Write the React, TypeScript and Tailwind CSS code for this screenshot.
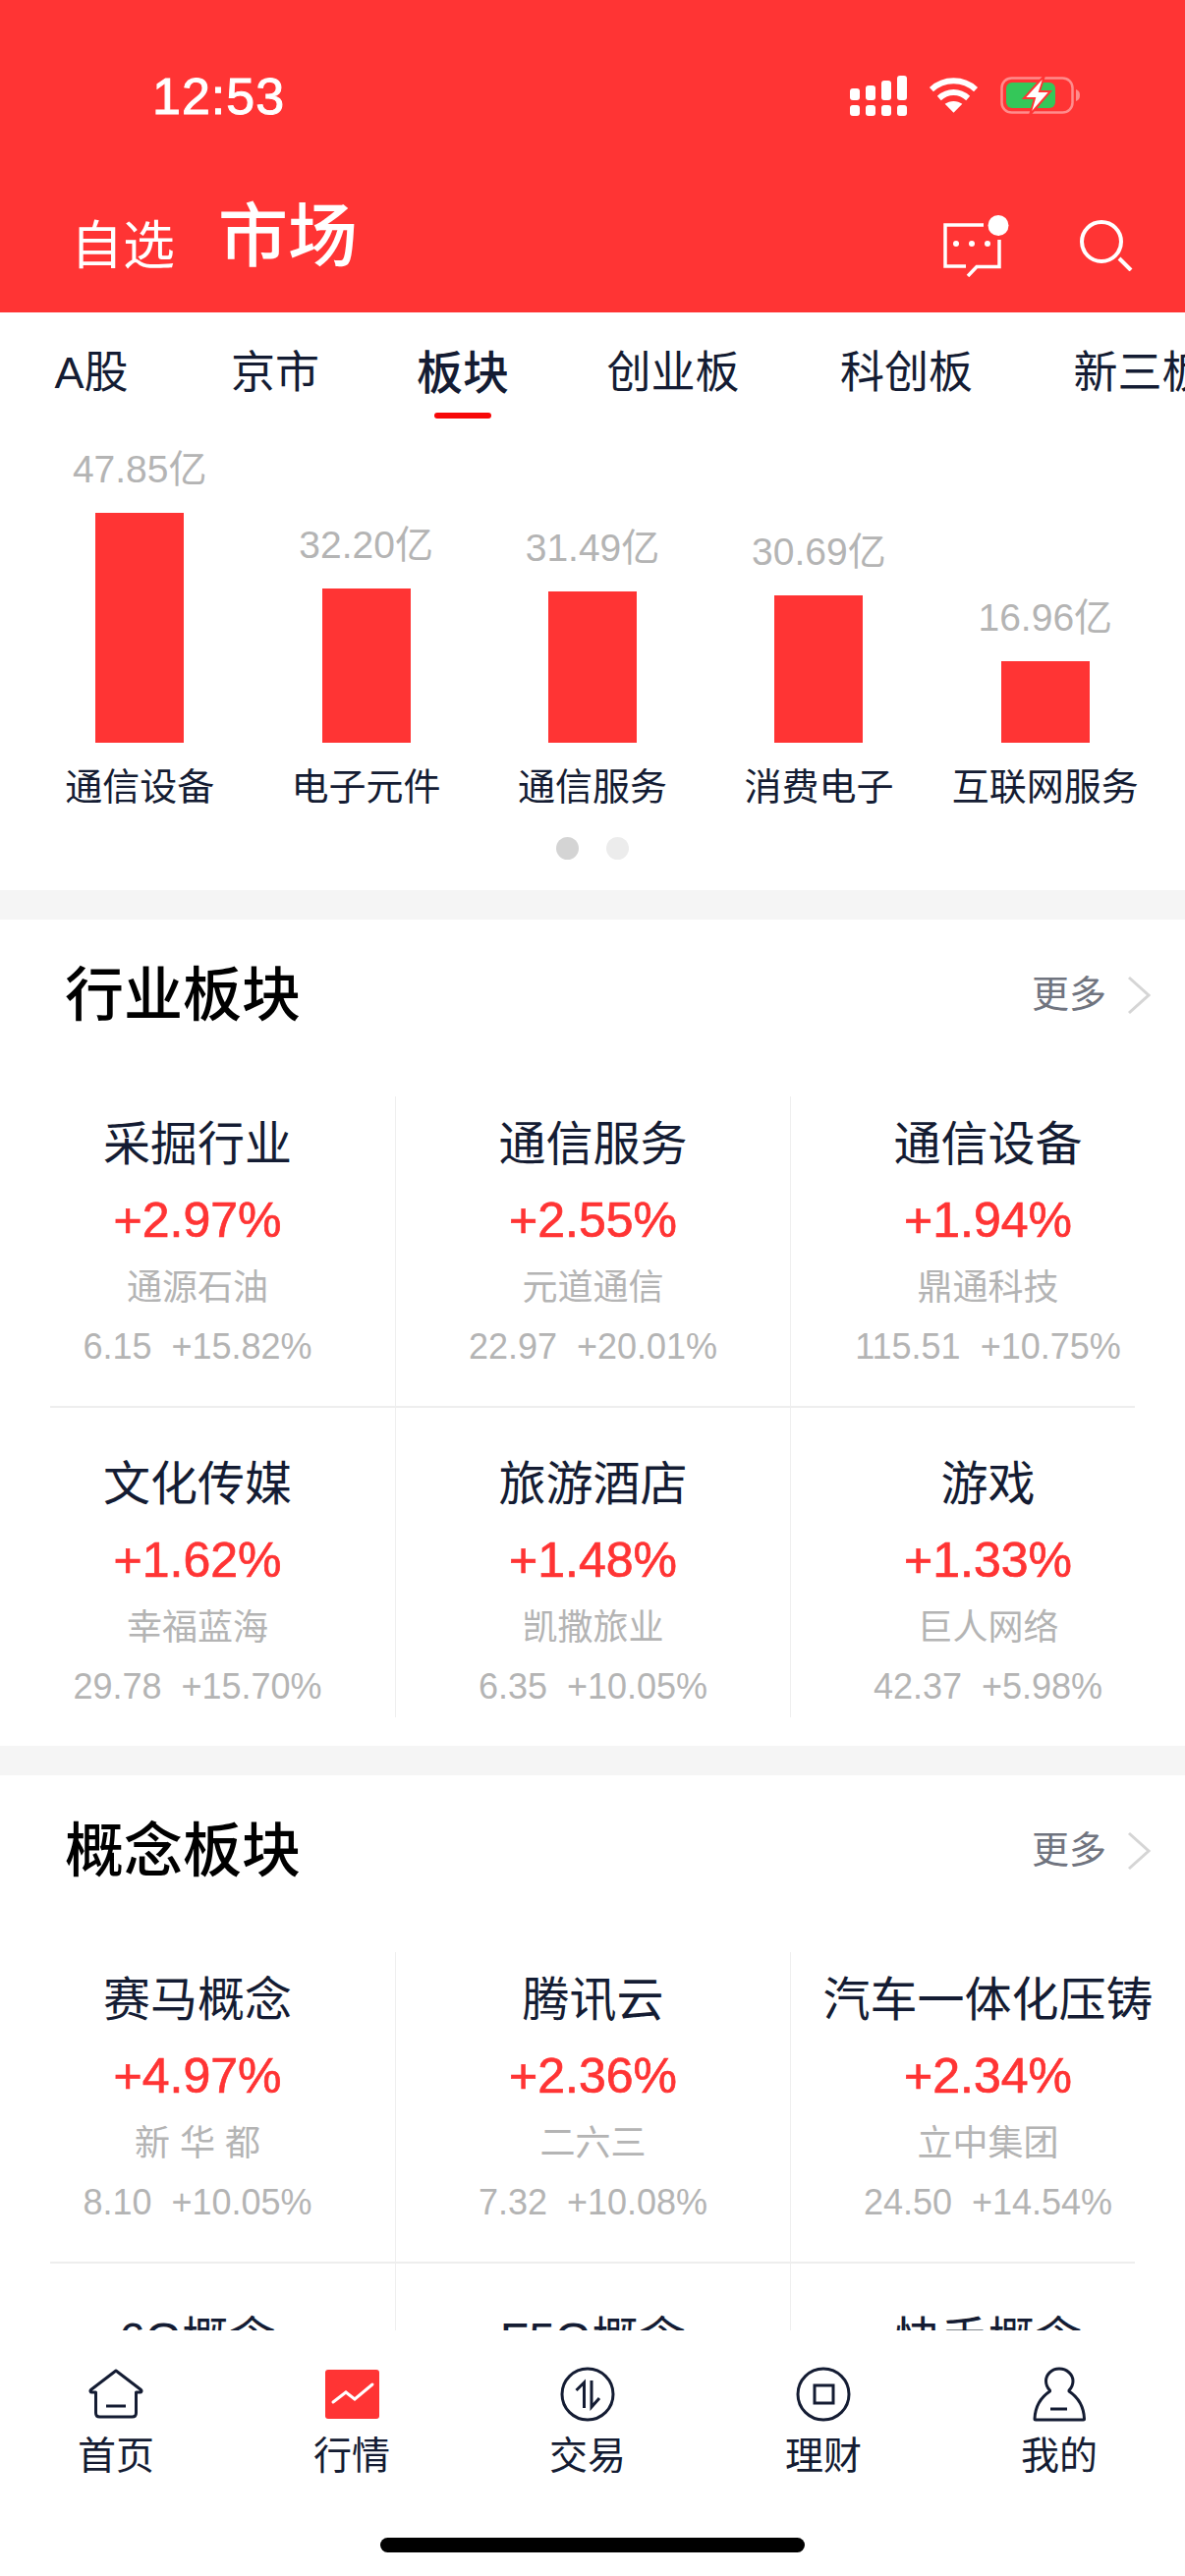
import React from 'react';

const bars = [
  { value: '47.85亿', name: '通信设备', height: 234 },
  { value: '32.20亿', name: '电子元件', height: 157 },
  { value: '31.49亿', name: '通信服务', height: 154 },
  { value: '30.69亿', name: '消费电子', height: 150 },
  { value: '16.96亿', name: '互联网服务', height: 83 },
];

const tabs = [
  { label: 'A股', cls: 'w-[186px]' },
  { label: '京市', cls: 'w-[188px]' },
  { label: '板块', cls: 'w-[194px]', active: true },
  { label: '创业板', cls: 'w-[234px]' },
  { label: '科创板', cls: 'w-[241px]' },
  { label: '新三板', cls: 'w-[234px]' },
];

const industry = [
  [
    { name: '采掘行业', pct: '+2.97%', stock: '通源石油', price: '6.15', chg: '+15.82%' },
    { name: '通信服务', pct: '+2.55%', stock: '元道通信', price: '22.97', chg: '+20.01%' },
    { name: '通信设备', pct: '+1.94%', stock: '鼎通科技', price: '115.51', chg: '+10.75%' },
  ],
  [
    { name: '文化传媒', pct: '+1.62%', stock: '幸福蓝海', price: '29.78', chg: '+15.70%' },
    { name: '旅游酒店', pct: '+1.48%', stock: '凯撒旅业', price: '6.35', chg: '+10.05%' },
    { name: '游戏', pct: '+1.33%', stock: '巨人网络', price: '42.37', chg: '+5.98%' },
  ],
];

const concept = [
  [
    { name: '赛马概念', pct: '+4.97%', stock: '新 华 都', price: '8.10', chg: '+10.05%' },
    { name: '腾讯云', pct: '+2.36%', stock: '二六三', price: '7.32', chg: '+10.08%' },
    { name: '汽车一体化压铸', pct: '+2.34%', stock: '立中集团', price: '24.50', chg: '+14.54%' },
  ],
  // this row is cut by the tab bar, only the tops of the names show
  [
    { name: '6G概念', pct: '', stock: '', price: '', chg: '' },
    { name: 'F5G概念', pct: '', stock: '', price: '', chg: '' },
    { name: '快手概念', pct: '', stock: '', price: '', chg: '' },
  ],
];

type Item = { name: string; pct: string; stock: string; price: string; chg: string };

const Cell = ({ item, col, row }: { item: Item; col: number; row: number }) => (
  <div
    className={`flex flex-col items-center ${row === 0 ? 'h-[315px] pt-[20px]' : 'h-[315px] pt-[49px]'} ${
      col > 0 ? 'border-l border-[#efefef]' : ''
    }`}
  >
    <div className="h-[58px] leading-[58px] text-[48px] text-[#141c33] whitespace-nowrap">{item.name}</div>
    <div className="h-[64px] mt-[16px] leading-[64px] text-[50px] text-[#ff3434] [-webkit-text-stroke:0.7px_#ff3434]">
      {item.pct}
    </div>
    <div className="h-[44px] mt-[15px] leading-[44px] text-[36px] text-[#b4b4b4]">{item.stock}</div>
    <div className="h-[44px] mt-[16px] leading-[44px] text-[36px] text-[#b4b4b4] whitespace-pre">
      {item.price}
      {'  '}
      {item.chg}
    </div>
  </div>
);

const Section = ({ title, rows }: { title: string; rows: Item[][] }) => (
  <section className="bg-white pb-[29px]">
    <div className="h-[180px] pb-[24px] flex items-center justify-between pl-[66px] pr-[34px]">
      <h2 className="text-[60px] font-medium text-black">{title}</h2>
      <div className="flex items-center gap-[20px] -mt-[2px]">
        <span className="text-[38px] leading-[50px] -mt-[2px] text-[#70747f]">更多</span>
        <svg width="26" height="42" viewBox="0 0 26 42" fill="none" stroke="#d5d5d5" strokeWidth="3">
          <path d="M3 3l20 18L3 39" />
        </svg>
      </div>
    </div>
    {rows.map((row, i) => (
      <div key={i}>
        {i > 0 && <div className="h-[2px] mx-[51px] bg-[#eeeeee]" />}
        <div className="grid grid-cols-3">
          {row.map((item, j) => (
            <Cell key={item.name} item={item} col={j} row={i} />
          ))}
        </div>
      </div>
    ))}
  </section>
);

const StatusIcons = () => (
  <div className="flex items-center gap-[22px]">
    <svg width="58" height="41" viewBox="0 0 58 41" fill="white">
      <rect x="0" y="13" width="10" height="12" rx="3" />
      <rect x="16" y="10" width="10" height="15" rx="3" />
      <rect x="32" y="5" width="10" height="20" rx="3" />
      <rect x="48" y="0" width="10" height="25" rx="3" />
      <rect x="0" y="30" width="10" height="11" rx="3" />
      <rect x="16" y="30" width="10" height="11" rx="3" />
      <rect x="32" y="30" width="10" height="11" rx="3" />
      <rect x="48" y="30" width="10" height="11" rx="3" />
    </svg>
    <svg width="51" height="38" viewBox="0 0 52 38" fill="none" stroke="white" strokeWidth="6">
      <path d="M3 13C16 1 36 1 49 13" />
      <path d="M11 22c9-8 21-8 30 0" />
      <path d="M26 37l-9-9c5-4 13-4 18 0z" fill="white" stroke="none" />
    </svg>
    <svg width="82" height="42" viewBox="0 0 82 42" fill="none">
      <rect x="1.5" y="3.5" width="72" height="35" rx="10" stroke="#ff8c8c" strokeWidth="2.5" />
      <rect x="6" y="8" width="50" height="26" rx="6" fill="#34c759" />
      <path d="M77 15c3 1 4 3 4 6s-1 5-4 6z" fill="#ff8c8c" />
      <path d="M45 1L24 24h11l-5 17 21-24H40z" fill="white" stroke="#ff3434" strokeWidth="2" />
    </svg>
  </div>
);

const NavIcon = ({ name }: { name: string }) => {
  const stroke = '#141c33';
  if (name === 'home')
    return (
      <svg width="56" height="52" viewBox="0 0 56 52" fill="none" stroke={stroke} strokeWidth="3" strokeLinejoin="round">
        <path d="M28 2L2.5 21.5c-1 1-.5 2.5 1 2.5H7.5v21c0 2.5 1.500 4 4 4h33c2.500 0 4-1.500 4-4V24h4c1.500 0 2-1.500 1-2.500z" />
        <path d="M18 38h20" />
      </svg>
    );
  if (name === 'market')
    return (
      <svg width="55" height="50" viewBox="0 0 55 50">
        <rect width="55" height="50" rx="3" fill="#ff3434" />
        <path d="M8 33l13-10 9 7 18-15" fill="none" stroke="white" strokeWidth="3" strokeLinecap="round" />
      </svg>
    );
  if (name === 'trade')
    return (
      <svg width="56" height="56" viewBox="0 0 56 56" fill="none" stroke={stroke} strokeWidth="3">
        <circle cx="28" cy="28" r="26" />
        <path d="M24.500 42V16l-8 8M32 14v27l8-9" />
      </svg>
    );
  if (name === 'finance')
    return (
      <svg width="56" height="56" viewBox="0 0 56 56" fill="none" stroke={stroke} strokeWidth="3">
        <circle cx="28" cy="28" r="26" />
        <rect x="19" y="19" width="19" height="18" />
      </svg>
    );
  return (
    <svg width="54" height="56" viewBox="0 0 54 56" fill="none" stroke={stroke} strokeWidth="3" strokeLinejoin="round">
      <path d="M27 2c8 0 14 6 14 12.500 0 4-2 7.500-4 9.500v1c9 6 15 16 15.500 28 0 .5-.5 1-1 1H3c-.5 0-1-.5-1-1C2.500 41 8.500 31 17.500 25v-1c-2-2-4-5.500-4-9.500C13.500 8 19 2 27 2z" />
      <path d="M18 43h17" />
    </svg>
  );
};

const nav = [
  { icon: 'home', label: '首页' },
  { icon: 'market', label: '行情' },
  { icon: 'trade', label: '交易' },
  { icon: 'finance', label: '理财' },
  { icon: 'user', label: '我的' },
];

export default function App() {
  return (
    <div
      className="w-[1206px] h-[2622px] overflow-hidden flex flex-col bg-white"
      style={{ fontFamily: '"Liberation Sans", "Noto Sans CJK SC", sans-serif' }}
    >
      <header className="h-[318px] shrink-0 bg-[#ff3434] text-white">
        <div className="h-[196px] pt-[62px] flex items-start justify-between pl-[155px] pr-[106px]">
          <span className="text-[52px] leading-[72px] tracking-[1px] [-webkit-text-stroke:1px_white]">12:53</span>
          <div className="pt-[14px]">
            <StatusIcons />
          </div>
        </div>
        <div className="h-[122px] flex items-start justify-between pl-[72px] pr-[53px]">
          <div className="flex items-end gap-[44px] h-[90px]">
            <span className="text-[53px] leading-[74px] translate-y-[2px]">自选</span>
            <span className="text-[71px] leading-[90px] font-medium">市场</span>
          </div>
          <div className="flex items-start gap-[72px] pt-[23px]">
            <svg width="67" height="63" viewBox="0 0 67 63" fill="none" stroke="white" strokeWidth="3.500">
              <path d="M41 10H2v42h21M25 62l9-9.500h23V25" />
              <circle cx="13" cy="29" r="3" fill="white" stroke="none" />
              <circle cx="29" cy="29" r="3" fill="white" stroke="none" />
              <circle cx="45" cy="29" r="3" fill="white" stroke="none" />
              <circle cx="56" cy="10.500" r="10.500" fill="white" stroke="none" />
            </svg>
            <svg className="mt-[5px]" width="54" height="52" viewBox="0 0 54 52" fill="none" stroke="white" strokeWidth="4">
              <circle cx="22" cy="22" r="20" />
              <path d="M40 39l12 12" />
            </svg>
          </div>
        </div>
      </header>

      <nav className="h-[112px] shrink-0 flex overflow-hidden">
        {tabs.map((t) => (
          <div key={t.label} className={`${t.cls} shrink-0 flex flex-col items-center`}>
            <span className={`mt-[32px] leading-[60px] text-[#141c33] ${t.active ? 'text-[47px] font-medium' : 'text-[45px]'}`}>
              {t.label}
            </span>
            {t.active && <span className="mt-[10px] w-[58px] h-[6px] rounded-[3px] bg-[#f70808]" />}
          </div>
        ))}
      </nav>

      <main className="flex-1 min-h-0 overflow-hidden bg-[#f5f5f5]">
        <section className="h-[476px] bg-white">
          <div className="h-[326px] px-[27px] grid grid-cols-5">
            {bars.map((b) => (
              <div key={b.name} className="flex flex-col items-center justify-end">
                <span className="text-[39px] leading-[50px] mb-[19px] text-[#b4b4b4]">{b.value}</span>
                <div className="w-[90px] bg-[#ff3434]" style={{ height: b.height }} />
              </div>
            ))}
          </div>
          <div className="px-[27px] grid grid-cols-5 mt-[21px]">
            {bars.map((b) => (
              <span key={b.name} className="text-center text-[38px] leading-[48px] text-[#141c33] whitespace-nowrap">
                {b.name}
              </span>
            ))}
          </div>
          <div className="flex justify-center gap-[28px] mt-[27px]">
            <span className="w-[23px] h-[23px] rounded-full bg-[#d4d4d4]" />
            <span className="w-[23px] h-[23px] rounded-full bg-[#ececec]" />
          </div>
        </section>
        <div className="h-[30px]" />
        <Section title="行业板块" rows={industry} />
        <div className="h-[30px]" />
        <Section title="概念板块" rows={concept} />
      </main>

      <footer className="h-[250px] shrink-0 bg-white flex flex-col">
        <div className="grid grid-cols-[repeat(5,240px)] -ml-[2px] pt-[36px]">
          {nav.map((n) => (
            <div key={n.label} className="flex flex-col items-center">
              <div className="h-[58px] flex items-center justify-center">
                <NavIcon name={n.icon} />
              </div>
              <span className="mt-[9px] text-[39px] leading-[50px] text-[#141c33]">{n.label}</span>
            </div>
          ))}
        </div>
        <div className="mt-auto mb-[24px] mx-auto w-[432px] h-[15px] rounded-full bg-black" />
      </footer>
    </div>
  );
}
